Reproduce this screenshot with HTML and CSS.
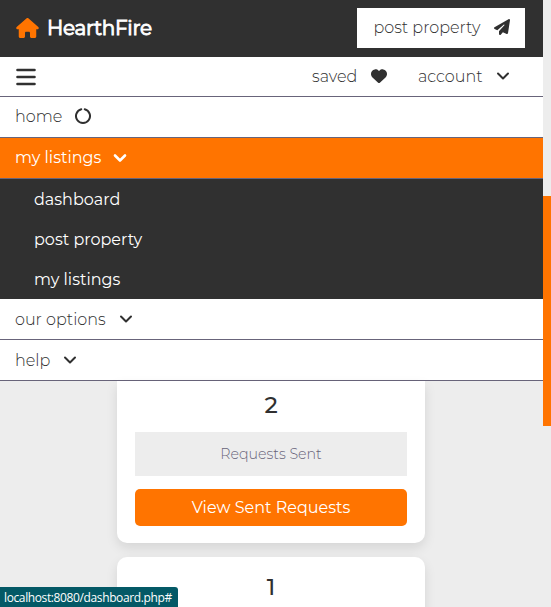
FILE: index.html
```html
<!DOCTYPE html>
<html lang="en">
<head>
<meta charset="utf-8">
<title>HearthFire</title>
<link rel="stylesheet" href="styles.css">
</head>
<body>
<div class="page">
  <header class="header">
    <a class="brand">
      <svg class="house" viewBox="0 0 576 512"><path d="M575.8 255.5c0 18-15 32.1-32 32.1h-32l.7 160.2c0 2.7-.2 5.4-.5 8.1V472c0 22.1-17.9 40-40 40H392c-22.1 0-40-17.9-40-40V384c0-17.7-14.3-32-32-32H256c-17.7 0-32 14.3-32 32v88c0 22.1-17.9 40-40 40H104c-22.1 0-40-17.9-40-40V287.6H32c-18 0-32-14-32-32.1c0-9 3-17 10-24L266.4 8c7-7 15-8 22-8s15 2 21 7L564.8 231.5c8 7 12 15 11 24z"/></svg>
      <span class="brand-name">HearthFire</span>
    </a>
    <a class="post"><span>post property</span>
      <svg class="plane" viewBox="0 0 512 512"><path d="M498.1 5.6c10.1 7 15.4 19.1 13.5 31.2l-64 416c-1.5 9.7-7.4 18.2-16 23s-18.9 5.4-28 1.6L284 427.7l-68.5 74.1c-8.9 9.7-22.9 12.9-35.2 8.1S160 493.2 160 480V396.4c0-4 1.5-7.8 4.2-10.7L331.8 202.8c5.8-6.3 5.6-16-.4-22s-15.7-6.4-22-.7L106 360.8 17.7 316.6C7.1 311.3 .3 300.7 0 288.9s5.9-22.8 16.1-28.7l448-256c10.7-6.1 23.9-5.5 34 1.4z"/></svg>
    </a>
  </header>
  <div class="toolbar">
    <svg class="bars" viewBox="0 0 20 18"><path d="M1.5 2h17M1.5 9h17M1.5 16h17"/></svg>
    <div class="tools">
      <a class="tool"><span class="saved">saved</span>
        <svg class="heart" viewBox="0 0 512 512"><path d="M47.6 300.4L228.3 469.1c7.5 7 17.4 10.9 27.7 10.9s20.2-3.9 27.7-10.9L464.4 300.4c30.4-28.3 47.6-68 47.6-109.5v-5.8c0-69.9-50.5-129.5-119.4-141C347 36.5 300.6 51.4 268 84L256 96 244 84c-32.6-32.6-79-47.5-124.6-39.9C50.5 55.6 0 115.2 0 185.1v5.8c0 41.5 17.2 81.2 47.6 109.5z"/></svg></a>
      <a class="tool"><span class="account">account</span>
        <svg class="chevron" viewBox="0 0 14 16"><path d="M2 5.5l5 5 5-5"/></svg></a>
    </div>
  </div>
  <nav class="menu">
    <a class="row"><span class="home">home</span>
      <svg class="ring" viewBox="0 0 16 16"><path d="M6.3 1.2a7 7 0 1 0 3.4 0"/></svg></a>
    <a class="row active"><span class="listings">my listings</span>
      <svg class="chevron" viewBox="0 0 14 16"><path d="M2 5.5l5 5 5-5"/></svg></a>
    <div class="submenu">
      <a class="sub">dashboard</a>
      <a class="sub">post property</a>
      <a class="sub">my listings</a>
    </div>
    <a class="row low"><span class="options">our options</span>
      <svg class="chevron" viewBox="0 0 14 16"><path d="M2 5.5l5 5 5-5"/></svg></a>
    <a class="row low"><span class="help">help</span>
      <svg class="chevron" viewBox="0 0 14 16"><path d="M2 5.5l5 5 5-5"/></svg></a>
  </nav>
  <main class="cards">
    <section class="card first">
      <h3 class="count">2</h3>
      <p class="label">Requests Sent</p>
      <a class="btn">View Sent Requests</a>
    </section>
    <section class="card"><h3 class="count">1</h3></section>
  </main>
</div>
<div class="scrollbar"><div class="thumb"></div></div>
<div class="status"><span class="url">localhost:8080/dashboard.php#</span></div>
</body>
</html>
```
FILE: styles.css
```css
* { box-sizing: border-box; margin: 0; padding: 0; }
body {
  display: flex;
  width: 551px;
  height: 607px;
  overflow: hidden;
  background: #ededed;
  color: #303030;
  font: 300 16px/24px Montserrat, Inter, sans-serif;
}
span { display: block; white-space: nowrap; }
svg { display: block; flex: none; fill: currentColor; }
.page { width: 543px; height: 607px; overflow: hidden; }
.header {
  display: flex; justify-content: space-between; align-items: flex-start;
  height: 57px; padding: 8px 18px 0 16px; background: #303030;
}
.brand { display: flex; align-items: center; height: 40px; gap: 8px; color: #fff; }
.house { width: 23px; height: 20px; fill: #ff7400; }
.brand-name { font-size: 20px; font-weight: 400; letter-spacing: -.3px; -webkit-text-stroke: .9px #fff; }
.post { display: flex; align-items: center; width: 168px; height: 40px; padding: 0 15px 0 16.5px; background: #fff; justify-content: space-between; }
.plane { width: 16px; height: 16px; margin-top: -2px; }
.toolbar {
  display: flex; justify-content: space-between; align-items: center;
  height: 40px; padding: 0 33px 0 16px; background: #fff; border-bottom: 1px solid #68647a;
}
.bars { width: 20px; height: 18px; fill: none; stroke: currentColor; stroke-width: 2.6; stroke-linecap: round; }
.tools { display: flex; gap: 31px; }
.tool { display: flex; align-items: center; }
.saved { width: 59px; }
.account { width: 78px; }
.heart { width: 16px; height: 16px; margin-top: -1px; }
.chevron { width: 14px; height: 16px; margin-top: -1px; fill: none; stroke: currentColor; stroke-width: 2; stroke-linecap: round; stroke-linejoin: round; }
.row {
  display: flex; align-items: center; gap: 13px;
  height: 41px; padding-left: 15px; background: #fff; border-bottom: 1px solid #68647a;
}
.low { padding-top: 1px; }
.active { background: #ff7400; color: #fff; font-weight: 400; }
.active .chevron { stroke-width: 2.6; }
.ring { width: 16px; height: 16px; margin-top: -2px; fill: none; stroke: currentColor; stroke-width: 2; stroke-linecap: round; }
.home { width: 47px; }
.listings { width: 85px; }
.options { width: 90.5px; }
.help { width: 35px; }
.submenu { height: 120px; padding-top: 1px; background: #303030; color: #fff; font-weight: 400; }
.sub { display: flex; align-items: center; height: 40px; padding-left: 34px; }
.cards { display: flex; flex-direction: column; align-items: center; gap: 14px; }
.card {
  flex: none; width: 308px; height: 162px; margin-right: 1px; padding: 15px 18px; background: #fff;
  border-radius: 10px; box-shadow: 0 5px 12px rgba(0, 0, 0, .1);
}
.first { padding-top: 9px; border-radius: 0 0 10px 10px; }
.count { height: 30px; font-size: 23px; line-height: 30px; font-weight: 500; text-align: center; }
.label {
  display: flex; align-items: center; justify-content: center; height: 44px; margin-top: 12px;
  background: #ededed; color: #68647a; font-size: 14.2px;
}
.btn {
  display: flex; align-items: center; justify-content: center; height: 37px; margin-top: 13px;
  border-radius: 5px; background: #ff7400; color: #fff; font-weight: 400;
}
.scrollbar { width: 8px; padding-top: 196px; background: #ededed; }
.thumb { height: 230px; background: #ff7400; }
.status {
  position: absolute; left: 0; bottom: 0; width: 178px; height: 20px; padding-left: 4px;
  border-radius: 0 3px 0 0; background: #045966; color: #fff;
  font: 400 12px/20px "Open Sans", sans-serif;
}
.url { padding-top: 1px; letter-spacing: -.38px; }
```
